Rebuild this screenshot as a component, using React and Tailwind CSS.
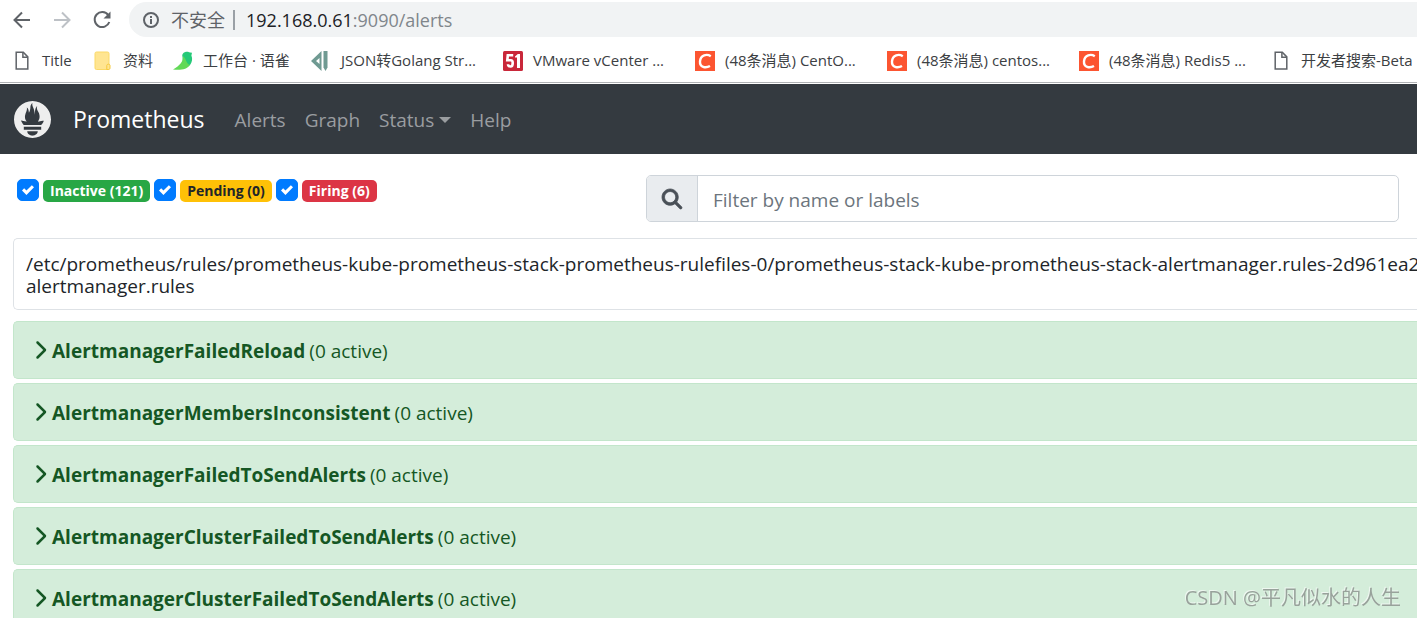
import { useState } from "react";
import { FaChevronRight, FaMagnifyingGlass } from "react-icons/fa6";
import { SiPrometheus } from "react-icons/si";

const FileIcon = () => (
  <svg className="h-5 w-5" viewBox="0 0 20 20" fill="none" stroke="#5f6368" strokeWidth="1.5">
    <path d="M4.200 1.300h7.100l4.500 4.600v12H4.200z" />
    <path d="M10.900 1.300v5h4.900" />
  </svg>
);

const FolderIcon = () => (
  <svg className="h-5 w-5" viewBox="0 0 20 20">
    <path d="M3.5 1h11A1.5 1.5 0 0 1 16 2.500V18.500H3.500A1.500 1.500 0 0 1 2 17V2.500A1.500 1.500 0 0 1 3.500 1z" fill="#ffe591" stroke="#fbd967" />
    <path d="M13.800 18.500v-4.200c0-1.500 3.200-1.500 3.200 0v2.700c0 1-.7 1.500-1.700 1.500z" fill="#ffe591" stroke="#f6c93d" />
  </svg>
);

const YuqueIcon = () => (
  <svg className="h-5 w-5" viewBox="0 0 20 20">
    <path d="M9.500 6C8.500 3 11 .8 14 .8c1.500 0 2.200.7 5 1l-.6 2.700c1.300 3.200.8 6.500-1.200 9.300-2 1.800-4 2.400-7 2.600z" fill="#25c978" />
    <path d="M10 5c.5 5-3 9.500-10 13.500 7 1 14.500 0 17-4.700C13.500 13.500 13.500 8 10 5z" fill="#62d957" />
  </svg>
);

const JsonIcon = () => (
  <svg className="h-5 w-5" viewBox="0 0 20 20" fill="#6f9a92">
    <path fillRule="evenodd" d="M10.500 0v20L0 10zM8.500 7L5 10l3.500 3z" />
    <path d="M12.500 0h4v16.500l-2 3.500-2-3.500z" />
  </svg>
);

const FiftyOneIcon = () => (
  <svg className="h-5 w-5" viewBox="0 0 20 20">
    <rect width="20" height="20" rx="1.500" fill="#c9283a" />
    <path d="M10.200 4.300H4.800L4.300 9.300h3.500c1.600 0 1.900.8 1.900 2.600 0 2.300-.5 3.600-2.200 3.600-1.500 0-2.500-.6-2.500-2.300" fill="none" stroke="#fff" strokeWidth="2.600" />
    <path d="M12 5.500l2.800-2.500H17v14h-3V6.500h-2z" fill="#fff" />
  </svg>
);

const CsdnIcon = () => (
  <svg className="h-5 w-5" viewBox="0 0 20 20">
    <rect width="20" height="20" fill="#fc5531" />
    <path d="M15.800 5.200C12 2.800 5.600 3.600 5 10.300c-.4 6 5.600 7.300 10 4.700" fill="none" stroke="#fff" strokeWidth="2.400" />
  </svg>
);

const bookmarks = [
  { icon: FileIcon, title: "Title", width: "w-[60px]" },
  { icon: FolderIcon, title: "资料", width: "w-[59px]" },
  { icon: YuqueIcon, title: "工作台 · 语雀", width: "w-[117px]" },
  { icon: JsonIcon, title: "JSON转Golang Str...", width: "w-[171px]" },
  { icon: FiftyOneIcon, title: "VMware vCenter ...", width: "w-[171px]" },
  { icon: CsdnIcon, title: "(48条消息) CentO...", width: "w-[171px]" },
  { icon: CsdnIcon, title: "(48条消息) centos...", width: "w-[171px]" },
  { icon: CsdnIcon, title: "(48条消息) Redis5 ...", width: "w-[171px]" },
  { icon: FileIcon, title: "开发者搜索-Beta", width: "w-[171px]" },
];

const alerts = [
  { id: 1, name: "AlertmanagerFailedReload", active: 0 },
  { id: 2, name: "AlertmanagerMembersInconsistent", active: 0 },
  { id: 3, name: "AlertmanagerFailedToSendAlerts", active: 0 },
  { id: 4, name: "AlertmanagerClusterFailedToSendAlerts", active: 0 },
  { id: 5, name: "AlertmanagerClusterFailedToSendAlerts", active: 0 },
];

const states = [
  { id: "inactive", label: "Inactive (121)", badge: "bg-[#28a745] text-white" },
  { id: "pending", label: "Pending (0)", badge: "bg-[#ffc107] text-[#212529]" },
  { id: "firing", label: "Firing (6)", badge: "bg-[#dc3545] text-white" },
];

function BrowserBar() {
  return (
    <div className="border-b border-[#b0b2b5] bg-white">
      <div className="flex h-[39px] items-center pl-3">
        <button aria-label="Back" className="mr-5 text-[#5f6368]">
          <svg className="h-5 w-5" viewBox="0 0 20 20" fill="none" stroke="currentColor" strokeWidth="2">
            <path d="M18 10H3M10 2.500L2.500 10l7.500 7.500" />
          </svg>
        </button>
        <button aria-label="Forward" className="mr-5 text-[#bdc1c6]">
          <svg className="h-5 w-5" viewBox="0 0 20 20" fill="none" stroke="currentColor" strokeWidth="2">
            <path d="M2 10h15M10 2.500l7.500 7.500-7.500 7.500" />
          </svg>
        </button>
        <button aria-label="Reload" className="mr-[17px] text-[#5f6368]">
          <svg className="h-5 w-5" viewBox="0 0 20 20" fill="none" stroke="currentColor" strokeWidth="2">
            <path d="M16.300 5.200A7.500 7.500 0 1 0 17.300 12" />
            <path d="M18.500 1.500v7h-7z" fill="currentColor" stroke="none" />
          </svg>
        </button>
        <div className="flex h-[35px] flex-1 items-center rounded-l-full bg-[#f1f3f4] pl-[14px] text-lg text-[#80868b]">
          <svg className="mr-3 h-4 w-4 text-[#5f6368]" viewBox="0 0 16 16" fill="none" stroke="currentColor" strokeWidth="2">
            <circle cx="8" cy="8" r="7" />
            <path d="M8 7v5M8 4v2" />
          </svg>
          <span className="text-[#5f6368]">不安全</span>
          <span className="mr-[11px] ml-2 h-5 w-0.5 bg-[#9aa0a6]" />
          <span className="text-[#202124]">192.168.0.61</span>
          <span>:9090/alerts</span>
        </div>
      </div>
      <div className="flex h-[43px] items-center gap-[21px] overflow-hidden pl-3 text-[15px] text-[#3c4043]">
        {bookmarks.map(({ icon: Icon, title, width }, i) => (
          <a key={i} href="#" className={`flex shrink-0 items-center gap-2.5 whitespace-nowrap ${width}`}>
            <span className="shrink-0">
              <Icon />
            </span>
            {title}
          </a>
        ))}
      </div>
    </div>
  );
}

function Navbar() {
  return (
    <nav className="mt-px flex h-[70px] items-center bg-[#343a40] pl-3.5 text-[19px] text-[#9a9da0]">
      <SiPrometheus className="mr-[22px] h-[37px] w-[37px] text-[#eee]" />
      <a href="#" className="mr-[30px] text-[23px] text-white">
        Prometheus
      </a>
      <div className="flex items-center gap-[19px] pt-0.5">
        <a href="#">Alerts</a>
        <a href="#">Graph</a>
        <button className="flex items-center gap-[5px]">
          Status
          <span className="border-x-6 border-t-6 border-x-transparent border-t-current" />
        </button>
        <a href="#">Help</a>
      </div>
    </nav>
  );
}

function StateFilter({ id, label, badge, checked, onToggle }) {
  return (
    <div className="flex items-center gap-1">
      <span className="relative flex">
        <input
          id={id}
          type="checkbox"
          checked={checked}
          onChange={onToggle}
          className="h-[22px] w-[22px] appearance-none rounded-[5px] border border-[#adb5bd] bg-white checked:border-[#007bff] checked:bg-[#007bff]"
        />
        {checked && (
          <svg className="pointer-events-none absolute top-[5px] left-[5px] h-3 w-3" viewBox="0 0 8 8">
            <path fill="#fff" d="M6.564.75l-3.590 3.612-1.538-1.550L0 4.260l2.974 2.990L8 2.193z" />
          </svg>
        )}
      </span>
      <label htmlFor={id} className={`mt-0.5 rounded-[5px] px-[7px] text-sm leading-[22px] font-bold ${badge}`}>
        {label}
      </label>
    </div>
  );
}

export default function App() {
  const [checked, setChecked] = useState({ inactive: true, pending: true, firing: true });
  const [search, setSearch] = useState("");

  return (
    <div className="h-screen overflow-hidden bg-white font-['Open_Sans','Noto_Sans_CJK_SC',sans-serif] text-[#212529]">
      <BrowserBar />
      <Navbar />

      <main className="pl-[13px]">
        <div className="flex items-start pt-[21px] pr-[18px]">
          <div className="flex w-[633px] gap-1 pt-[3px] pl-1">
            {states.map((state) => (
              <StateFilter
                key={state.id}
                {...state}
                checked={checked[state.id]}
                onToggle={() => setChecked({ ...checked, [state.id]: !checked[state.id] })}
              />
            ))}
          </div>
          <div className="flex h-[47px] flex-1 overflow-hidden rounded-[5px] border border-[#ced4da]">
            <label
              htmlFor="search"
              aria-label="Search"
              className="flex w-[51px] items-center justify-center border-r border-[#ced4da] bg-[#e9ecef] text-[#495057]"
            >
              <FaMagnifyingGlass className="h-5 w-5 overflow-visible stroke-current stroke-[20]" />
            </label>
            <input
              id="search"
              value={search}
              onChange={(e) => setSearch(e.target.value)}
              placeholder="Filter by name or labels"
              className="min-w-0 flex-1 px-[15px] pt-1 text-[19px] outline-none placeholder:text-[#6c757d]"
            />
          </div>
        </div>

        {/* rule group */}
        <div className="mt-4 rounded-l-[5px] border border-r-0 border-[#dee2e6] px-3 pt-[14px] pb-3 text-[19px] leading-[22px] whitespace-nowrap">
          <p>
            /etc/prometheus/rules/prometheus-kube-prometheus-stack-prometheus-rulefiles-0/prometheus-stack-kube-prometheus-stack-alertmanager.rules-2d961ea2
          </p>
          <p>alertmanager.rules</p>
        </div>

        <ul className="mt-[11px] flex flex-col gap-1">
          {alerts.map((alert) => (
            <li key={alert.id}>
              <button className="flex h-[58px] w-full items-center rounded-l-[5px] border border-r-0 border-[#c3e6cb] bg-[#d4edda] pt-0.5 pl-[18px] text-[19px] text-[#155724]">
                <FaChevronRight className="mr-1 mb-0.5 h-5 w-4" />
                <strong className="mr-1 font-bold">{alert.name}</strong>
                <span>({alert.active} active)</span>
              </button>
            </li>
          ))}
        </ul>
      </main>

      <div className="fixed right-4 bottom-1.5 text-xl leading-7 text-[#98a29b] [text-shadow:-1px_-1px_0_#eef7f0]">
        CSDN @平凡似水的人生
      </div>
    </div>
  );
}
